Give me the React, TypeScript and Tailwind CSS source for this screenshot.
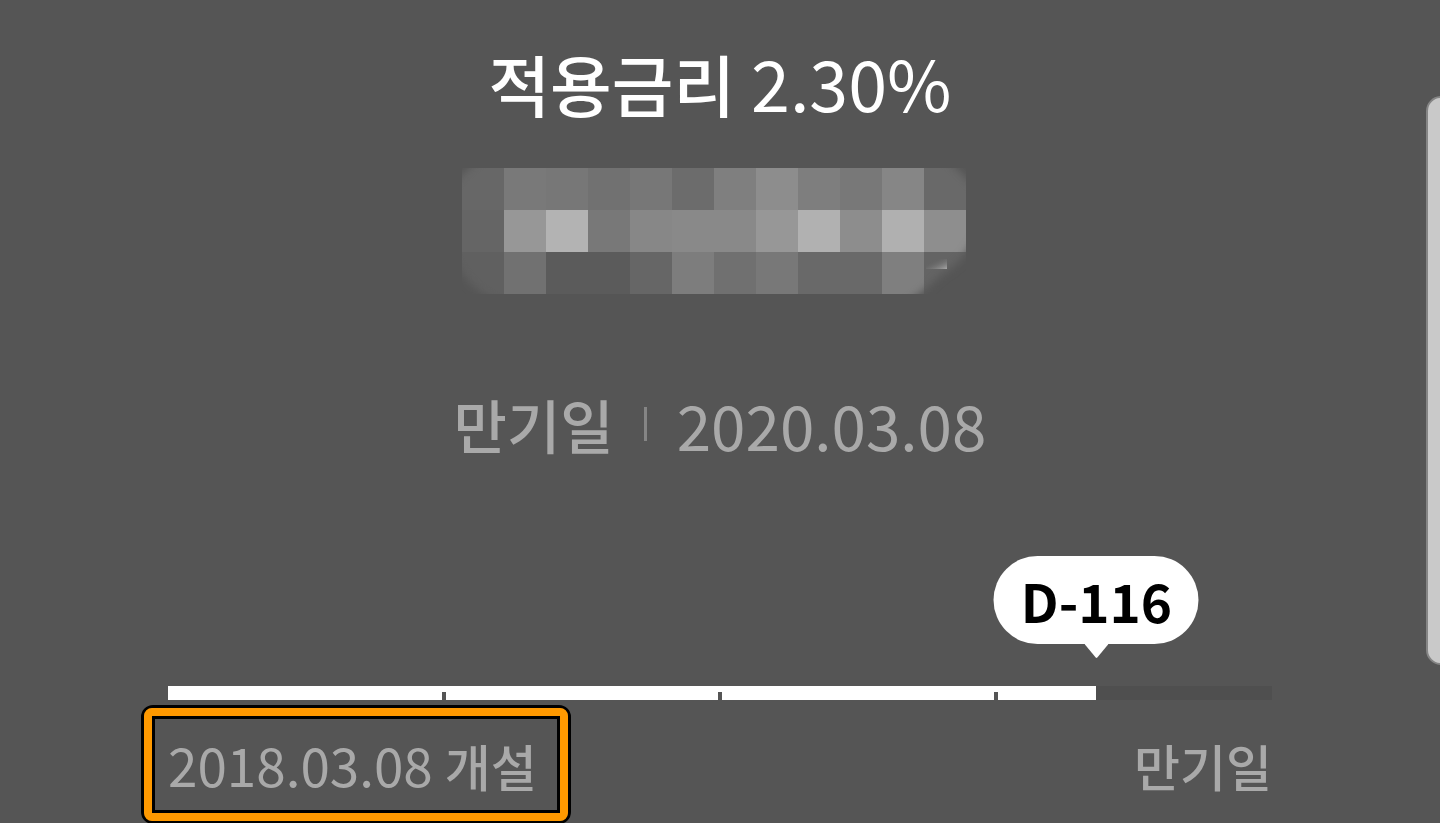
import clsx from "clsx";

// Blurred-out balance, one value per mosaic block
const MOSAIC = [
  ["#676767", "#797979", "#777777", "#717171", "#777777", "#6c6c6c", "#7f7f7f", "#8d8d8d", "#7e7e7e", "#787878", "#868686", "#696969"],
  ["#656565", "#979797", "#b3b3b3", "#787878", "#878787", "#898989", "#898989", "#979797", "#b1b1b1", "#8d8d8d", "#b0b0b0", "#8e8e8e"],
  ["#606060", "#717171", "#5b5b5b", "#5b5b5b", "#666666", "#7d7d7d", "#707070", "#787878", "#696969", "#696969", "#7f7f7f", "#646464"],
];
const BLOCK = 42;

const TICKS = ["left-1/4", "left-1/2", "left-3/4"];

function HiddenBalance() {
  return (
    <svg width="504" height="126" viewBox="0 0 504 126" role="img" aria-label="잔액 숨김">
      <defs>
        <filter id="feather" x="-10%" y="-20%" width="120%" height="140%">
          <feGaussianBlur stdDeviation="4" />
        </filter>
        <linearGradient id="glint" x1="0" y1="0" x2="1" y2="1">
          <stop offset="0.2" stopColor="#5c5c5c" stopOpacity="0" />
          <stop offset="1" stopColor="#a8a8a8" />
        </linearGradient>
        <mask id="edge">
          <path
            d="M-12 24 Q-2 2 26 -12 H478 Q496 -2 516 24 V66 Q500 96 480 106 Q462 124 440 138 H44 Q2 122 -12 82 Z"
            fill="#fff"
            filter="url(#feather)"
          />
        </mask>
      </defs>
      <g mask="url(#edge)" shapeRendering="crispEdges">
        {MOSAIC.map((row, y) =>
          row.map((fill, x) => (
            <rect key={`${x}-${y}`} x={x * BLOCK} y={y * BLOCK} width={BLOCK} height={BLOCK} fill={fill} />
          ))
        )}
      </g>
      <rect x="464" y="91" width="21" height="10" fill="url(#glint)" />
    </svg>
  );
}

function TermProgress({ percent, label }: { percent: number; label: string }) {
  return (
    <div className="relative h-[14px] bg-[#4f4f4f]" role="progressbar" aria-valuenow={percent} aria-label="가입 기간">
      <div className="h-full bg-white" style={{ width: `${percent}%` }} />
      {TICKS.map((left) => (
        <span key={left} className={clsx("absolute bottom-0 h-2 w-1 -translate-x-1/2 bg-[#555555]", left)} />
      ))}
      <div
        className="absolute bottom-full mb-7 flex -translate-x-1/2 flex-col items-center"
        style={{ left: `${percent}%` }}
      >
        <span className="flex h-[88px] w-[205px] items-center justify-center rounded-full bg-white text-[53px] leading-none font-bold whitespace-nowrap text-black">
          {label}
        </span>
        <svg className="block" width="24" height="14" viewBox="0 0 24 14">
          <path d="M0 0H24L12.800 13.500Q12 14.400 11.200 13.500Z" fill="#fff" />
        </svg>
      </div>
    </div>
  );
}

export default function App() {
  return (
    <main className="relative min-h-screen overflow-hidden bg-[#555555] font-['Noto_Sans_CJK_KR',sans-serif] text-[#a9a9a9]">
      <section className="flex flex-col items-center pt-8">
        <h1 className="flex items-baseline gap-4 text-[67px] leading-[100px] font-medium text-white">
          적용금리 <span className="text-[70px] font-normal">2.30%</span>
        </h1>
        <div className="mt-[35px] mr-3">
          <HiddenBalance />
        </div>
        <dl className="mt-[86px] flex items-center text-[58px] leading-[88px]">
          <dt className="font-medium">만기일</dt>
          <dd className="flex items-center">
            <span className="mx-[30px] h-[34px] w-[3px] bg-[#858585]" />
            <span className="text-[62px]">2020.03.08</span>
          </dd>
        </dl>
      </section>

      <section className="mx-[168px] mt-[218px]">
        <TermProgress percent={84.1} label="D-116" />
        <div className="flex items-center justify-between pt-[26px] text-[50px] leading-[76px] font-medium">
          <div className="relative">
            <p className="flex items-baseline gap-3 whitespace-nowrap">
              <span className="text-[53px] font-normal">2018.03.08</span> 개설
            </p>
            {/* highlight frame */}
            <div className="absolute -top-[21px] -right-[34px] -bottom-[21px] -left-[27px] rounded-xl border-[3px] border-black">
              <div className="h-full rounded-lg border-8 border-[#ff9900]">
                <div className="h-full border-[3px] border-black" />
              </div>
            </div>
          </div>
          <p>만기일</p>
        </div>
      </section>

      <div className="absolute top-24 -right-4 h-[569px] w-[30px] rounded-2xl border-2 border-[#858585] bg-[#c9c9c9]" />
    </main>
  );
}
